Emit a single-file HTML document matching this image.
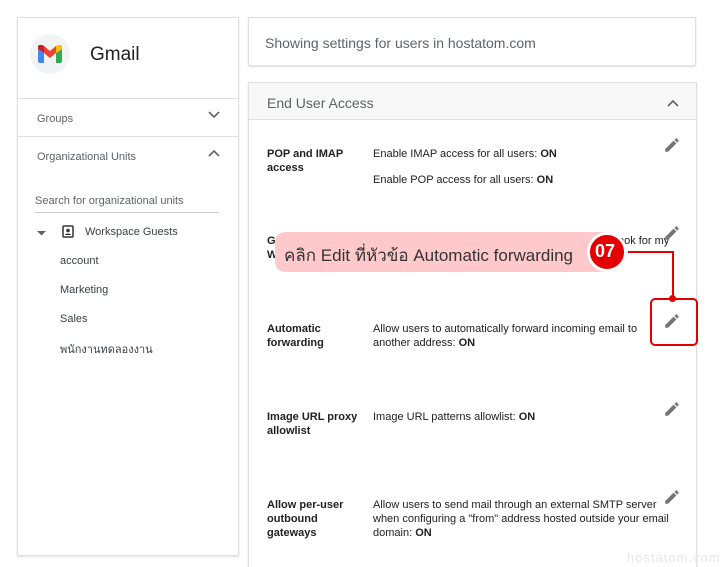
<!DOCTYPE html>
<html><head><meta charset="utf-8"><style>
*{margin:0;padding:0;box-sizing:border-box}
html,body{width:720px;height:567px;overflow:hidden}
body{background:#fff;font-family:"Liberation Sans",sans-serif;position:relative;color:#202124}
.a{position:absolute;white-space:nowrap}
.card{position:absolute;background:#fff;border:1px solid #e0e0e0;box-shadow:0 1px 2px rgba(0,0,0,.12)}
.lbl{font-size:11px;font-weight:bold;line-height:14px;color:#202124;white-space:normal;width:95px;margin-top:6px}
.txt{font-size:11px;line-height:14px;color:#202124;white-space:normal;width:300px;margin-top:6px}
.pen{position:absolute;width:18px;height:18px}
.sm{font-size:11px;color:#5f6368}
</style></head><body>
<div class="card" style="left:17px;top:17px;width:222px;height:539px">
  <div style="position:absolute;left:12px;top:16px;width:40px;height:40px;border-radius:50%;background:#f1f3f4"></div>
  <svg class="a" style="left:20px;top:27px" width="24" height="18" viewBox="0 0 24 18">
    <path d="M2 18h4V8L0 4v12c0 1 1 2 2 2z" fill="#4285f4"/>
    <path d="M18 18h4c1 0 2-1 2-2V4l-6 4z" fill="#34a853"/>
    <path d="M18 1v7l6-4V2c0-2-2-3-4-2z" fill="#fbbc04"/>
    <path d="M6 8V1l6 5 6-5v7l-6 5z" fill="#ea4335"/>
    <path d="M0 2v2l6 4V1L4 0C2-1 0 0 0 2z" fill="#c5221f"/>
  </svg>
  <div class="a" style="left:72px;top:26px;font-size:19px;color:#202124">Gmail</div>
  <div style="position:absolute;left:0;right:0;top:80px;border-top:1px solid #e0e0e0"></div>
  <div class="a sm" style="left:19px;top:95px">Groups</div>
  <svg class="a" style="left:190px;top:93px" width="12" height="8" viewBox="0 0 12 8"><path d="M1 1l5 5 5-5" stroke="#5f6368" stroke-width="1.6" fill="none"/></svg>
  <div style="position:absolute;left:0;right:0;top:118px;border-top:1px solid #e0e0e0"></div>
  <div class="a sm" style="left:19px;top:133px">Organizational Units</div>
  <svg class="a" style="left:190px;top:131px" width="12" height="8" viewBox="0 0 12 8"><path d="M1 7l5-5 5 5" stroke="#5f6368" stroke-width="1.6" fill="none"/></svg>
  <div class="a" style="left:17px;top:177px;font-size:11px;color:#5f6368">Search for organizational units</div>
  <div style="position:absolute;left:17px;width:184px;top:194px;border-top:1px solid #ccc"></div>
  <svg class="a" style="left:19px;top:213px" width="10" height="6"><path d="M0 0h9l-4.5 4.5z" fill="#5f6368"/></svg>
  <svg class="a" style="left:44px;top:207px" width="12" height="13" viewBox="0 0 12 13"><rect x="1" y="1" width="10" height="11" rx="1" stroke="#333" stroke-width="1.5" fill="none"/><circle cx="6" cy="5.5" r="1.8" fill="#333"/><path d="M3 10c0-2 6-2 6 0z" fill="#333"/></svg>
  <div class="a" style="left:67px;top:208px;font-size:11px;color:#3c4043">Workspace Guests</div>
  <div class="a" style="left:42px;top:237px;font-size:11px;color:#3c4043">account</div>
  <div class="a" style="left:42px;top:266px;font-size:11px;color:#3c4043">Marketing</div>
  <div class="a" style="left:42px;top:295px;font-size:11px;color:#3c4043">Sales</div>
  <div class="a" style="left:42px;top:322px;font-size:11px;color:#3c4043">พนักงานทดลองงาน</div>
</div>
<div class="card" style="left:248px;top:17px;width:448px;height:49px">
  <div class="a" style="left:16px;top:17px;font-size:14px;color:#5f6368">Showing settings for users in hostatom.com</div>
</div>
<div class="card" style="left:248px;top:82px;width:449px;height:485px;border-bottom:none">
  <div style="position:absolute;left:0;right:0;top:0;height:37px;background:#f8f8f8;border-bottom:1px solid #e0e0e0"></div>
  <div class="a" style="left:18px;top:12px;font-size:14px;color:#5f6368">End User Access</div>
  <svg class="a" style="left:418px;top:16px" width="12" height="8" viewBox="0 0 12 8"><path d="M1 7l5-5 5 5" stroke="#5f6368" stroke-width="1.6" fill="none"/></svg>
  <div class="a lbl" style="left:18px;top:58px">POP and IMAP access</div>
  <div class="a txt" style="left:124px;top:58px">Enable IMAP access for all users: <b>ON</b></div>
  <div class="a txt" style="left:124px;top:84px">Enable POP access for all users: <b>ON</b></div>
  <div class="a lbl" style="left:18px;top:145px">Google Workspace Sync</div>
  <div class="a txt" style="left:124px;top:145px;width:310px">Enable Google Workspace Sync for Microsoft Outlook for my</div>
  <div class="a lbl" style="left:18px;top:233px">Automatic forwarding</div>
  <div class="a txt" style="left:124px;top:233px;width:280px">Allow users to automatically forward incoming email to another address: <b>ON</b></div>
  <div class="a lbl" style="left:18px;top:321px">Image URL proxy allowlist</div>
  <div class="a txt" style="left:124px;top:321px">Image URL patterns allowlist: <b>ON</b></div>
  <div class="a lbl" style="left:18px;top:409px">Allow per-user outbound gateways</div>
  <div class="a txt" style="left:124px;top:409px;width:305px">Allow users to send mail through an external SMTP server when configuring a "from" address hosted outside your email domain: <b>ON</b></div>
</div>
<svg class="pen" style="left:663px;top:136px" viewBox="0 0 24 24"><path d="M3 17.25V21h3.75L17.81 9.94l-3.75-3.75L3 17.25zM20.71 7.04a1 1 0 000-1.410l-2.34-2.34a1 1 0 00-1.41 0l-1.830 1.830 3.75 3.75 1.83-1.83z" fill="#757575"/></svg>
<svg class="pen" style="left:663px;top:224px" viewBox="0 0 24 24"><path d="M3 17.25V21h3.75L17.81 9.94l-3.75-3.75L3 17.25zM20.71 7.04a1 1 0 000-1.41l-2.34-2.34a1 1 0 00-1.41 0l-1.83 1.83 3.75 3.75 1.83-1.83z" fill="#757575"/></svg>
<svg class="pen" style="left:663px;top:312px" viewBox="0 0 24 24"><path d="M3 17.25V21h3.75L17.81 9.94l-3.75-3.75L3 17.25zM20.71 7.04a1 1 0 000-1.41l-2.34-2.34a1 1 0 00-1.41 0l-1.83 1.83 3.75 3.75 1.83-1.83z" fill="#757575"/></svg>
<svg class="pen" style="left:663px;top:400px" viewBox="0 0 24 24"><path d="M3 17.25V21h3.75L17.81 9.94l-3.75-3.75L3 17.25zM20.71 7.04a1 1 0 000-1.41l-2.34-2.34a1 1 0 00-1.41 0l-1.83 1.83 3.75 3.75 1.83-1.83z" fill="#757575"/></svg>
<svg class="pen" style="left:663px;top:488px" viewBox="0 0 24 24"><path d="M3 17.25V21h3.75L17.81 9.94l-3.75-3.75L3 17.25zM20.71 7.04a1 1 0 000-1.41l-2.34-2.34a1 1 0 00-1.41 0l-1.83 1.83 3.75 3.75 1.83-1.83z" fill="#757575"/></svg>
<div style="position:absolute;left:275px;top:232px;width:340px;height:40px;background:#ffc9cc;border-radius:10px"></div>
<div class="a" style="left:284px;top:242px;font-size:17px;color:#333">คลิก Edit ที่หัวข้อ Automatic forwarding</div>
<div style="position:absolute;left:587px;top:232px;width:40px;height:40px;border-radius:50%;background:#e30000;border:3px solid #fff"></div>
<div class="a" style="left:595px;top:241px;font-size:18px;font-weight:bold;color:#fff">07</div>
<div style="position:absolute;left:628px;top:251px;width:46px;height:48px;border-top:2px solid #e30000;border-right:2px solid #e30000"></div>
<div style="position:absolute;left:669px;top:295px;width:7px;height:7px;border-radius:50%;background:#e30000"></div>
<div style="position:absolute;left:650px;top:298px;width:48px;height:48px;border:2px solid #e30000;border-radius:5px"></div>
<div class="a" style="left:627px;top:550px;font-size:13px;color:#e8e8e8;letter-spacing:1px">hostatom.com</div>
</body></html>
